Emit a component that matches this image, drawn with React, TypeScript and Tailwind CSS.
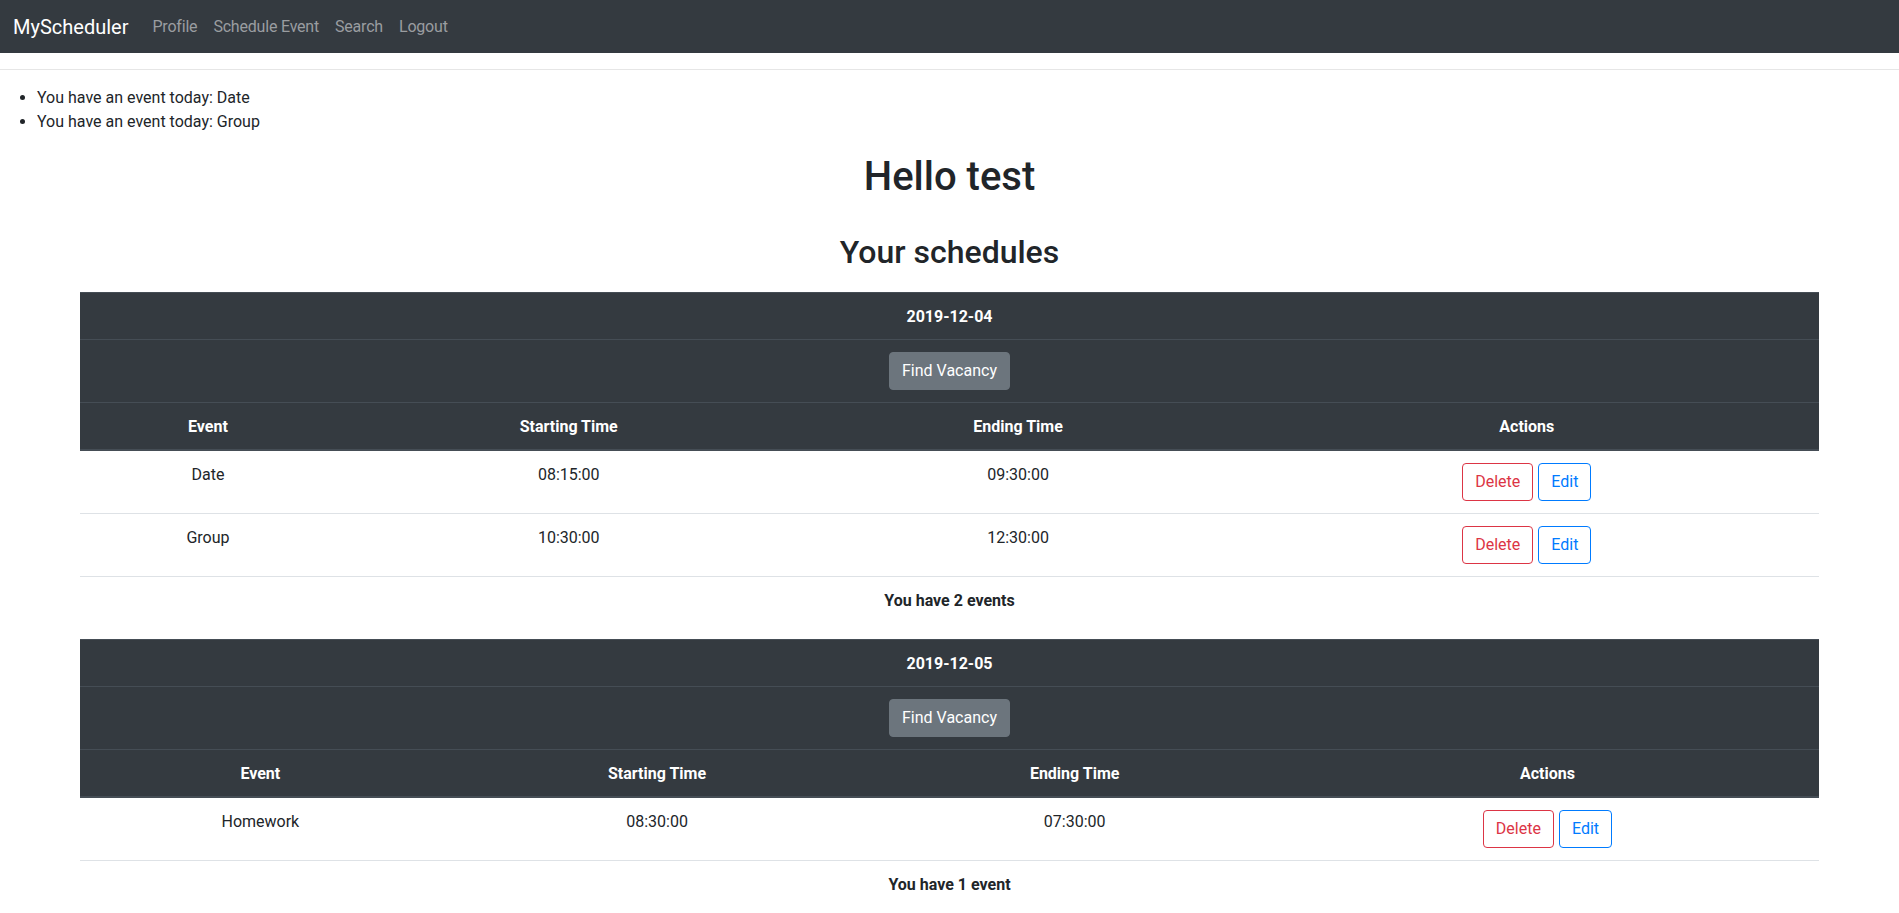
import React from 'react'

type Ev = { name: string; start: string; end: string }

const schedules: { date: string; events: Ev[] }[] = [
  {
    date: '2019-12-04',
    events: [
      { name: 'Date', start: '08:15:00', end: '09:30:00' },
      { name: 'Group', start: '10:30:00', end: '12:30:00' },
    ],
  },
  {
    date: '2019-12-05',
    events: [{ name: 'Homework', start: '08:30:00', end: '07:30:00' }],
  },
]

const td = 'px-3 pt-[13px] pb-[11px] align-top border-t border-[#dee2e6]'
const th = 'px-3 pt-[13px] pb-[11px] border-t border-b-2 border-[#454d55] font-bold'

function ScheduleTable({ date, events }: { date: string; events: Ev[] }) {
  return (
    <table className="w-full border-collapse text-center mb-4 leading-[22px]">
      <thead className="bg-[#343a40] text-white">
        <tr>
          <th colSpan={4} className="px-3 pt-[13px] pb-[11px] border-t border-[#454d55] font-bold">
            {date}
          </th>
        </tr>
        <tr>
          <th colSpan={4} className="px-3 py-3 border-t border-[#454d55] font-normal">
            <button className="bg-[#6c757d] border border-[#6c757d] text-white rounded px-3 py-1.5 leading-6">
              Find Vacancy
            </button>
          </th>
        </tr>
        <tr>
          <th className={th}>Event</th>
          <th className={th}>Starting Time</th>
          <th className={th}>Ending Time</th>
          <th className={th}>Actions</th>
        </tr>
      </thead>
      <tbody>
        {events.map(ev => (
          <tr key={ev.name}>
            <td className={td}>{ev.name}</td>
            <td className={td}>{ev.start}</td>
            <td className={td}>{ev.end}</td>
            <td className="px-3 py-3 align-top border-t border-[#dee2e6]">
              <div className="flex justify-center gap-[5px]">
                <button className="border border-[#dc3545] text-[#dc3545] rounded px-3 py-1.5 leading-6">
                  Delete
                </button>
                <button className="border border-[#007bff] text-[#007bff] rounded px-3 py-1.5 leading-6">
                  Edit
                </button>
              </div>
            </td>
          </tr>
        ))}
      </tbody>
      <tfoot>
        <tr>
          <td colSpan={4} className="px-3 pt-[13px] pb-[11px] border-t border-[#dee2e6] font-bold">
            You have {events.length} {events.length === 1 ? 'event' : 'events'}
          </td>
        </tr>
      </tfoot>
    </table>
  )
}

export default function App() {
  return (
    <div className="min-h-screen bg-white text-[#212529] text-base font-['Roboto',sans-serif]">
      <nav className="h-[53px] bg-[#343a40] flex items-center pl-[13px]">
        <a className="text-white text-[20px] mr-4">MyScheduler</a>
        <ul className="flex">
          {['Profile', 'Schedule Event', 'Search', 'Logout'].map(l => (
            <li key={l}>
              <a className="block px-2 text-[#9a9da0] tracking-[-0.2px]">{l}</a>
            </li>
          ))}
        </ul>
      </nav>
      <hr className="mt-4 mb-4 border-0 border-t border-[#e6e6e6]" />
      <ul className="list-disc pl-[37px] leading-6">
        <li>You have an event today: Date</li>
        <li>You have an event today: Group</li>
      </ul>
      <h1 className="mt-[19px] text-[40px] leading-[48px] font-medium text-center">Hello test</h1>
      <h2 className="mt-[32px] text-[32px] leading-[38px] font-medium text-center">Your schedules</h2>
      <div className="w-[1739px] mx-auto mt-[21px]">
        {schedules.map(s => (
          <ScheduleTable key={s.date} date={s.date} events={s.events} />
        ))}
      </div>
    </div>
  )
}
